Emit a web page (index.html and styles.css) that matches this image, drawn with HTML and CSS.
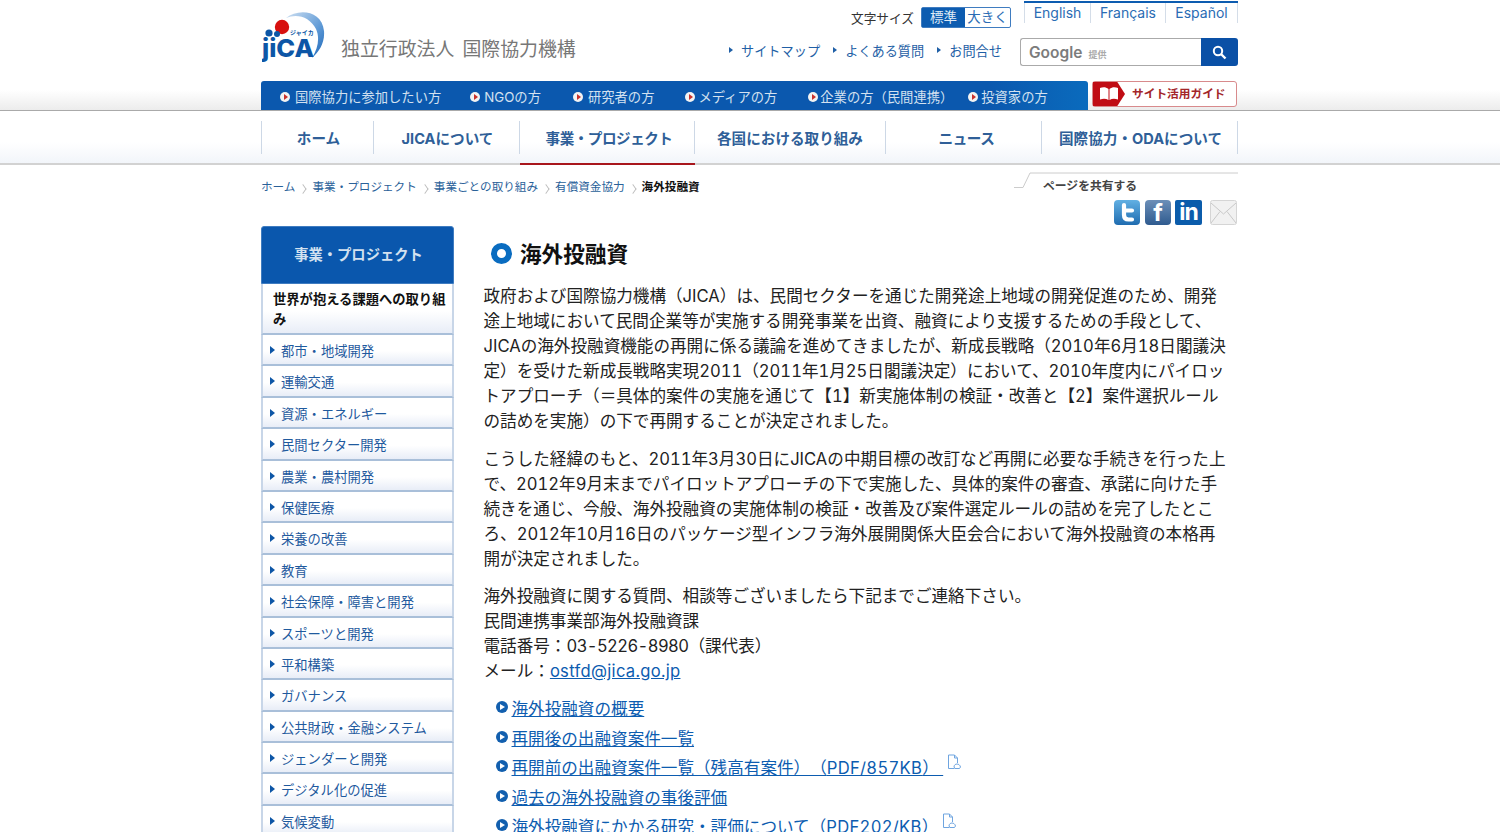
FILE: index.html
```html
<!DOCTYPE html>
<html lang="ja">
  <head>
    <meta charset="UTF-8" />
    <title>海外投融資 | 事業・プロジェクト - JICA</title>
    <link rel="stylesheet" href="styles.css">
  </head>
  <body>
    <header class="header">
      <div class="wrap header-top">
        <a class="logo" href="#">
          <svg width="66" height="54" viewBox="0 0 66 54">
            <defs>
              <linearGradient id="swoosh" x1="0" y1="0" x2="1" y2="1">
                <stop offset="0" stop-color="#cfe0f2" />
                <stop offset="0.6" stop-color="#5f9ad6" />
                <stop offset="1" stop-color="#1b66b8" />
              </linearGradient>
            </defs>
            <path d="M24 7C36-3 60-1 62 20 63 32 57 41 50 47 56 37 58 27 54 18 48 6 35 2 24 7Z" fill="url(#swoosh)" />
            <circle cx="20" cy="16" r="7.2" fill="#d7100f" />
            <circle cx="7" cy="22" r="3.6" fill="#0d56a6" />
            <circle cx="15" cy="23" r="3" fill="#0d56a6" />
            <text class="logo-kana" x="28" y="24">ジャイカ</text>
            <text class="logo-name" x="0" y="46" textLength="52" lengthAdjust="spacingAndGlyphs">jiCA</text>
          </svg>
        </a>
        <div class="site-name">独立行政法人 国際協力機構</div>
        <div class="header-right">
          <div class="header-row">
            <span class="size-label">文字サイズ</span>
            <div class="size-switch">
              <a class="size-on" href="#">標準</a>
              <a href="#">大きく</a>
            </div>
            <ul class="langs">
              <li><a href="#">English</a></li>
              <li><a href="#">Français</a></li>
              <li><a href="#">Español</a></li>
            </ul>
          </div>
          <div class="header-row header-row-b">
            <ul class="util">
              <li><a href="#">サイトマップ</a></li>
              <li><a href="#">よくある質問</a></li>
              <li><a href="#">お問合せ</a></li>
            </ul>
            <form class="search">
              <div class="search-box"><b>Google</b><span>提供</span></div>
              <button class="search-btn" type="button">
                <svg width="15" height="15" viewBox="0 0 15 15">
                  <circle cx="6" cy="6" r="4.2" fill="none" stroke="#fff" stroke-width="2" />
                  <path d="M9 9l4.5 4.5" stroke="#fff" stroke-width="2.4" />
                </svg>
              </button>
            </form>
          </div>
        </div>
      </div>
      <div class="wrap audience-row">
        <ul class="audience">
          <li><a href="#">国際協力に参加したい方</a></li>
          <li><a href="#">NGOの方</a></li>
          <li><a href="#">研究者の方</a></li>
          <li><a href="#">メディアの方</a></li>
          <li><a href="#">企業の方（民間連携）</a></li>
          <li><a href="#">投資家の方</a></li>
        </ul>
        <a class="guide" href="#">
          <span class="guide-icon">
            <svg width="20" height="14" viewBox="0 0 20 14">
              <path d="M1 1c3-1 6-1 8.500 1v11C7 11.500 4 11.500 1 12.500zM19 1c-3-1-6-1-8.500 1v11c2.500-1.500 5.500-1.500 8.500-.5z" fill="#fff" />
            </svg>
          </span>
          <span>サイト活用ガイド</span>
        </a>
      </div>
    </header>

    <nav class="gnav">
      <ul class="wrap gnav-list">
        <li class="g1"><a href="#">ホーム</a></li>
        <li class="g2"><a href="#">JICAについて</a></li>
        <li class="g3 active"><a href="#">事業・プロジェクト</a></li>
        <li class="g4"><a href="#">各国における取り組み</a></li>
        <li class="g5"><a href="#">ニュース</a></li>
        <li class="g6"><a href="#">国際協力・ODAについて</a></li>
      </ul>
    </nav>

    <div class="wrap crumb-row">
      <ol class="crumbs">
        <li><a href="#">ホーム</a></li>
        <li><a href="#">事業・プロジェクト</a></li>
        <li><a href="#">事業ごとの取り組み</a></li>
        <li><a href="#">有償資金協力</a></li>
        <li class="current">海外投融資</li>
      </ol>
      <div class="share">
        <svg class="share-tab" width="224" height="18" viewBox="0 0 224 18">
          <path d="M0 15.500h9L16 1h208" fill="none" stroke="#ccc" />
        </svg>
        <p class="share-title">ページを共有する</p>
        <div class="share-icons">
          <a class="si si-tw" href="#">
            <svg width="26" height="25" viewBox="0 0 26 25">
              <path d="M10 5v10c0 3 1.500 4.500 4.500 4.500H18M10 10.500h8" fill="none" stroke="#fff" stroke-width="4.200" stroke-linecap="round" />
            </svg>
          </a>
          <a class="si si-fb" href="#">f</a>
          <a class="si si-in" href="#">in</a>
          <a class="si si-mail" href="#">
            <svg width="27" height="25" viewBox="0 0 27 25">
              <rect x="0.500" y="0.500" width="26" height="24" rx="2" fill="#f1f1f1" stroke="#d5d5d5" />
              <path d="M1 3l12.500 11L26 3M1 23l9-11.500M26 23l-9-11.500" fill="none" stroke="#c9c9c9" />
            </svg>
          </a>
        </div>
      </div>
    </div>

    <div class="wrap columns">
      <aside class="side">
        <h2 class="side-title">事業・プロジェクト</h2>
        <ul class="side-list">
          <li class="side-current"><a href="#">世界が抱える課題への取り組み</a></li>
          <li><a href="#">都市・地域開発</a></li>
          <li><a href="#">運輸交通</a></li>
          <li><a href="#">資源・エネルギー</a></li>
          <li><a href="#">民間セクター開発</a></li>
          <li><a href="#">農業・農村開発</a></li>
          <li><a href="#">保健医療</a></li>
          <li><a href="#">栄養の改善</a></li>
          <li><a href="#">教育</a></li>
          <li><a href="#">社会保障・障害と開発</a></li>
          <li><a href="#">スポーツと開発</a></li>
          <li><a href="#">平和構築</a></li>
          <li><a href="#">ガバナンス</a></li>
          <li><a href="#">公共財政・金融システム</a></li>
          <li><a href="#">ジェンダーと開発</a></li>
          <li><a href="#">デジタル化の促進</a></li>
          <li><a href="#">気候変動</a></li>
        </ul>
      </aside>

      <main class="main">
        <h1 class="title">海外投融資</h1>
        <p>政府および国際協力機構（JICA）は、民間セクターを通じた開発途上地域の開発促進のため、開発途上地域において民間企業等が実施する開発事業を出資、融資により支援するための手段として、JICAの海外投融資機能の再開に係る議論を進めてきましたが、新成長戦略（2010年6月18日閣議決定）を受けた新成長戦略実現2011（2011年1月25日閣議決定）において、2010年度内にパイロットアプローチ（＝具体的案件の実施を通じて【1】新実施体制の検証・改善と【2】案件選択ルールの詰めを実施）の下で再開することが決定されました。</p>
        <p>こうした経緯のもと、2011年3月30日にJICAの中期目標の改訂など再開に必要な手続きを行った上で、2012年9月末までパイロットアプローチの下で実施した、具体的案件の審査、承諾に向けた手続きを通じ、今般、海外投融資の実施体制の検証・改善及び案件選定ルールの詰めを完了したところ、2012年10月16日のパッケージ型インフラ海外展開関係大臣会合において海外投融資の本格再開が決定されました。</p>
        <p>海外投融資に関する質問、相談等ございましたら下記までご連絡下さい。<br>民間連携事業部海外投融資課<br>電話番号：<span class="tel">03-5226-8980</span>（課代表）<br>メール：<a href="#">ostfd@jica.go.jp</a></p>
        <ul class="links">
          <li><a href="#">海外投融資の概要</a></li>
          <li><a href="#">再開後の出融資案件一覧</a></li>
          <li><a href="#">再開前の出融資案件一覧（残高有案件）（<span class="latin">PDF/857KB</span>）&nbsp;</a><svg class="pdf" width="15" height="16" viewBox="0 0 15 16"><path d="M1.500 1h6l3 3v5M1.500 1v13.500h6M7.500 1v3h3" fill="none" stroke="#6fa5e0" /><path d="M7 13c0-2 1.500-3 3-3s3 1 3.500 3l-1 1.500H8z" fill="none" stroke="#6fa5e0" /></svg></li>
          <li><a href="#">過去の海外投融資の事後評価</a></li>
          <li><a href="#">海外投融資にかかる研究・評価について（<span class="latin">PDF202/KB</span>）</a><svg class="pdf" width="15" height="16" viewBox="0 0 15 16"><path d="M1.500 1h6l3 3v5M1.500 1v13.500h6M7.500 1v3h3" fill="none" stroke="#6fa5e0" /><path d="M7 13c0-2 1.500-3 3-3s3 1 3.500 3l-1 1.500H8z" fill="none" stroke="#6fa5e0" /></svg></li>
        </ul>
      </main>
    </div>
  </body>
</html>
```

FILE: styles.css
```css
html,
body {
  height: 100%;
  overflow: hidden;
}
body {
  margin: 0;
  background: #fff;
  color: #222;
  font-family: Inter, "Noto Sans CJK JP", sans-serif;
  font-variant-numeric: tabular-nums;
  text-spacing-trim: space-all;
}
a {
  color: inherit;
  text-decoration: none;
}
ul,
ol {
  list-style: none;
  margin: 0;
  padding: 0;
}
.wrap {
  width: 977px;
  margin-left: 261px;
}

/* header */
.header {
  height: 110px;
  background: linear-gradient(#fff 90px, #ececec 110px);
}
.header-top {
  display: flex;
  height: 81px;
}
.logo {
  margin: 11px 0 0 1px;
}
.logo-name {
  font-size: 25px;
  font-weight: 800;
  fill: #0d56a6;
}
.logo-kana {
  font-size: 6px;
  font-weight: 700;
  fill: #0d56a6;
}
.site-name {
  margin: 38px 0 0 13px;
  font-size: 18.900px;
  line-height: 24px;
  word-spacing: 3px;
  color: #777;
  white-space: nowrap;
}
.header-right {
  margin-left: auto;
  width: 387px;
}
.header-row {
  display: flex;
  align-items: flex-start;
  height: 38px;
}
.header-row-b {
  height: 28px;
}
.size-label {
  flex: 0 0 64px;
  margin-top: 10px;
  font-size: 12.700px;
  line-height: 17px;
  color: #333;
  white-space: nowrap;
}
.size-switch {
  display: flex;
  flex: 0 0 90px;
  margin: 7px 0 0 6px;
  height: 21px;
  box-sizing: border-box;
  border: 1px solid #3f7cc0;
  border-radius: 2px;
  font-size: 13.500px;
  line-height: 19px;
  text-align: center;
  color: #2a6cb4;
}
.size-switch a {
  flex: 1;
  white-space: nowrap;
}
.size-switch .size-on {
  flex: 0 0 43px;
  background: #0d5cb0;
  color: #dfeaf6;
}
.langs {
  display: grid;
  grid-template-columns: 67px 75px 72px;
  flex: 0 0 214px;
  margin: 1px 0 0 13px;
  height: 22px;
  box-sizing: border-box;
  border-top: 2px solid #0d5cb0;
  font-size: 14px;
  line-height: 19px;
  color: #2a6cb4;
  text-align: center;
}
.langs li {
  border-right: 1px solid #d4dde8;
  white-space: nowrap;
}
.langs li:first-child {
  border-left: 1px solid #d4dde8;
}
.util {
  display: flex;
  flex: 0 0 274px;
  margin: 4px 0 0 -123px;
  justify-content: flex-end;
  font-size: 13.200px;
  line-height: 18px;
  color: #1f5fa6;
}
.util li {
  position: relative;
  margin-left: 25px;
  white-space: nowrap;
}
.util li:first-child {
  margin-left: 0;
}
.util li::before {
  content: "";
  position: absolute;
  left: -12px;
  top: 5px;
  border-left: 4px solid #1f5fa6;
  border-top: 3px solid transparent;
  border-bottom: 3px solid transparent;
}
.search {
  display: flex;
  flex: 0 0 218px;
  margin: 0 0 0 18px;
  height: 28px;
}
.search-box {
  flex: 1;
  box-sizing: border-box;
  border: 1px solid #aaa;
  border-right: none;
  border-radius: 3px 0 0 3px;
  padding-left: 8px;
  line-height: 26px;
  color: #888;
}
.search-box b {
  font-size: 15.500px;
  font-weight: 600;
  color: #7c7c7c;
}
.search-box span {
  margin-left: 6px;
  font-size: 9px;
  font-weight: 700;
  color: #aaa;
}
.search-btn {
  display: flex;
  align-items: center;
  justify-content: center;
  width: 37px;
  padding: 0;
  border: none;
  border-radius: 0 3px 3px 0;
  background: #0a50a6;
}

/* blue bar */
.audience-row {
  display: flex;
  height: 29px;
}
.audience {
  display: flex;
  gap: 29px;
  flex: 0 0 827px;
  box-sizing: border-box;
  padding-left: 19px;
  border-radius: 3px 3px 0 0;
  background: linear-gradient(to right, #0b58ae 88%, #0a6bbd);
  font-size: 13.300px;
  line-height: 32px;
  color: #d3e1f0;
  white-space: nowrap;
}
.audience li:nth-child(2) { margin-right: 3px; }
.audience li:nth-child(3) { margin-right: 2px; }
.audience li:nth-child(4) { margin-right: 2px; }
.audience li:nth-child(5) { margin-right: -14px; }
.audience a {
  position: relative;
  display: flex;
  align-items: center;
}
.audience a::before {
  content: "";
  width: 10px;
  height: 10px;
  margin-right: 5px;
  border-radius: 50%;
  background: #f3f3f3;
}
.audience li:nth-child(2) a::before { margin-right: 4px; }
.audience li:nth-child(4) a::before,
.audience li:nth-child(6) a::before { margin-right: 3px; }
.audience li:nth-child(5) a::before { margin-right: 2px; }
.audience a::after {
  content: "";
  position: absolute;
  left: 4px;
  top: 13px;
  border-left: 4px solid #c9302c;
  border-top: 3px solid transparent;
  border-bottom: 3px solid transparent;
}
.guide {
  display: flex;
  align-items: flex-start;
  flex: 0 0 145px;
  margin-left: 4px;
  height: 26px;
  box-sizing: border-box;
  border: 1px solid #d88a8c;
  border-radius: 3px;
  background: #fff;
  font-size: 11.700px;
  font-weight: 700;
  line-height: 25px;
  color: #a3262a;
  white-space: nowrap;
}
.guide-icon {
  display: flex;
  align-items: center;
  justify-content: center;
  margin-right: 7px;
  width: 32px;
  height: 24px;
  background: #c00c14;
  clip-path: polygon(0 0, 76% 0, 100% 50%, 76% 100%, 0 100%);
}

/* global nav */
.gnav {
  height: 52px;
  border-top: 1px solid #aaa;
  border-bottom: 2px solid #d2d2d2;
  background: linear-gradient(#fff 60%, #f2f5fa);
}
.gnav-list {
  display: flex;
  height: 52px;
  box-sizing: border-box;
  padding-top: 10px;
  font-size: 14.600px;
  font-weight: 700;
  color: #2f5f98;
  text-align: center;
}
.gnav-list li {
  position: relative;
  height: 33px;
  border-left: 1px solid #cdd8e6;
  line-height: 37px;
  white-space: nowrap;
}
.g1 { width: 111px; text-indent: 2px; }
.g2 { width: 145px; text-indent: 2px; }
.g3 { width: 174px; text-indent: 4px; letter-spacing: -0.5px; }
.g4 { width: 190px; }
.g5 { width: 155px; text-indent: 6px; letter-spacing: -0.4px; }
.g6 { width: 195px; text-indent: 2px; border-right: 1px solid #cdd8e6; }
.gnav-list .active::after {
  content: "";
  position: absolute;
  left: 0;
  right: -1px;
  top: 42px;
  height: 2px;
  background: #a8161c;
}

/* breadcrumb + share */
.crumb-row {
  display: flex;
  justify-content: space-between;
  height: 61px;
}
.crumbs {
  display: flex;
  margin-top: 13px;
  font-size: 11.600px;
  line-height: 18px;
  color: #2a6199;
  white-space: nowrap;
}
.crumbs li + li {
  margin-left: 17px;
  position: relative;
}
.crumbs li + li::before {
  content: "";
  position: absolute;
  left: -12px;
  top: 8px;
  width: 5px;
  height: 5px;
  border-top: 1px solid #bbb;
  border-right: 1px solid #bbb;
  transform: rotate(45deg) skew(10deg, 10deg);
}
.crumbs .current {
  font-weight: 700;
  color: #111;
}
.share {
  position: relative;
  width: 224px;
  padding-top: 12px;
}
.share-tab {
  position: absolute;
  left: 0;
  top: 7px;
}
.share-title {
  margin: 0 0 0 29px;
  font-size: 11.800px;
  font-weight: 700;
  line-height: 18px;
  color: #444;
}
.share-icons {
  display: flex;
  justify-content: flex-end;
  gap: 5px;
  margin-top: 5px;
  padding-right: 1px;
}
.si {
  display: block;
  width: 26px;
  height: 25px;
  border-radius: 4px;
  color: #fff;
  font-weight: 700;
  line-height: 25px;
  text-align: center;
}
.si-tw {
  background: linear-gradient(#62b0e3, #1f6cb0);
}
.si-fb {
  margin-right: -1px;
  background: linear-gradient(#6c8fb8, #2f5b8f);
  font-size: 24px;
}
.si-in {
  width: 27px;
  margin-right: 3px;
  border-radius: 2px;
  background: #0b5cab;
  font-size: 23px;
  letter-spacing: -1px;
}
.si-mail {
  width: 27px;
}

/* columns */
.columns {
  display: flex;
  align-items: flex-start;
}
.side {
  flex: 0 0 193px;
}
.side-title {
  margin: 0;
  height: 58px;
  box-sizing: border-box;
  border-radius: 3px 3px 0 0;
  border: 1px solid #3f7cc0;
  background: #0a57ad;
  color: #d3e1f0;
  font-size: 14.300px;
  line-height: 56px;
  text-align: center;
  text-indent: 2px;
}
.side-list li {
  position: relative;
  box-sizing: border-box;
  height: 31.400px;
  border: 2px solid #c8d6e8;
  border-top: none;
  border-bottom: 2px solid #a9bfd9;
  background: linear-gradient(#fff 55%, #e8edf7);
  font-size: 13.300px;
  line-height: 33px;
  padding-left: 18px;
  color: #1f5a9e;
}
.side-list li::before {
  content: "";
  position: absolute;
  left: 7px;
  top: 11px;
  border-left: 5px solid #0d56a6;
  border-top: 4px solid transparent;
  border-bottom: 4px solid transparent;
}
.side-list .side-current {
  height: 51px;
  padding: 5px 4px 0 10px;
  line-height: 20px;
  font-weight: 700;
  color: #111;
}
.side-list .side-current::before {
  display: none;
}

/* main */
.main {
  margin-left: 29.500px;
  width: 748px;
  font-size: 16.600px;
  line-height: 25px;
  color: #222;
}
.main p {
  margin: 0 0 12.500px;
}
.main p a {
  color: #0c5cb0;
  text-decoration: underline;
  letter-spacing: 0.3px;
}
.tel {
  letter-spacing: -0.6px;
}
.title {
  display: flex;
  align-items: center;
  margin: 14px 0 16px 7.500px;
  height: 28px;
  font-size: 21.600px;
  line-height: 28px;
  color: #111;
}
.title::before {
  content: "";
  width: 9px;
  height: 9px;
  margin-right: 8px;
  margin-bottom: 2px;
  border: 6px solid #0a6cc0;
  border-radius: 50%;
}
.links {
  margin: -1.500px 0 0 12px;
}
.links li {
  position: relative;
  padding-left: 16px;
  height: 29.500px;
  line-height: 29.500px;
  white-space: nowrap;
}
.links li::before {
  content: "";
  position: absolute;
  left: 0;
  top: 6px;
  width: 12px;
  height: 12px;
  border-radius: 50%;
  background: #125fae;
}
.links li::after {
  content: "";
  position: absolute;
  left: 4px;
  top: 9px;
  border-left: 5px solid #fff;
  border-top: 3px solid transparent;
  border-bottom: 3px solid transparent;
}
.links a {
  color: #0c5cb0;
  text-decoration: underline;
}
.latin {
  letter-spacing: 0.3px;
}
.pdf {
  margin-left: 4px;
  vertical-align: 4px;
}
```
